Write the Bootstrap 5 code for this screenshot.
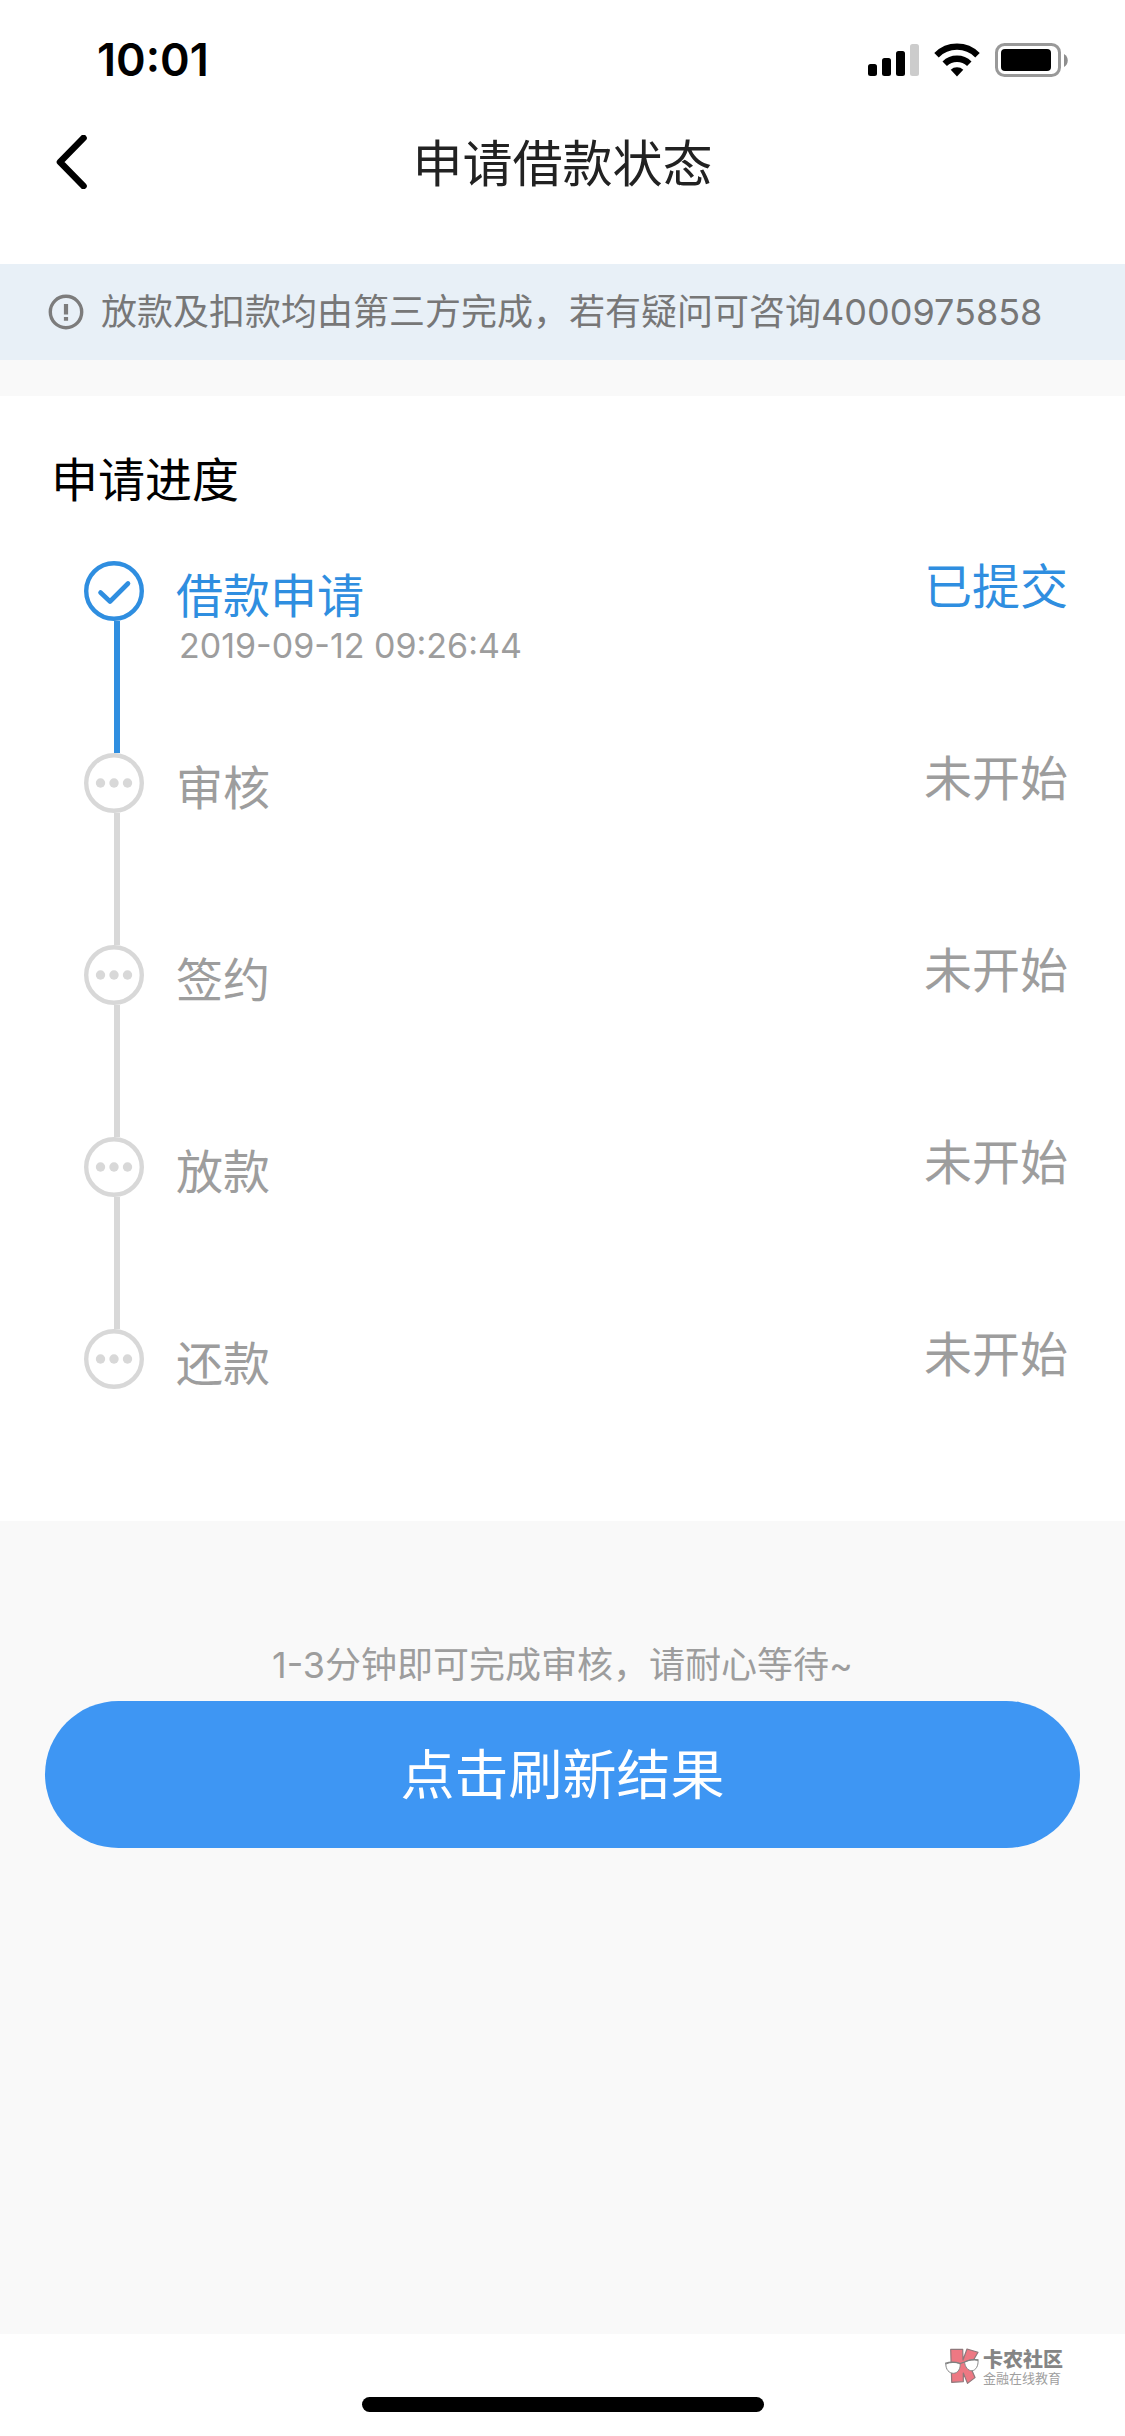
<!DOCTYPE html>
<html lang="zh-CN">
<head>
<meta charset="utf-8">
<meta name="viewport" content="width=device-width, initial-scale=1">
<title>申请借款状态</title>
<link href="https://cdn.jsdelivr.net/npm/bootstrap@5.3.0/dist/css/bootstrap.min.css" rel="stylesheet">
<style>
:root { --brand: #2f8ee0; --muted: #9d9d9d; --idle: #d8d8d8; }
body { font-family: Inter, "Noto Sans CJK SC", sans-serif; color: #000; background: #fff; }
svg { display: block; flex: none; }
.status-bar { height: 120px; padding: 0 57px 0 97px; }
.status-time { font-size: 45px; line-height: 60px; font-weight: 600; }
.title-bar { height: 144px; padding: 0 48px 60px; }
.title-bar h1 { font-size: 50px; line-height: 60px; padding-top: 4px; color: #222; font-weight: 400; }
.title-side { width: 48px; }
.notice { height: 96px; padding: 0 48px; gap: 17px; background: #e8f0f7; color: #777; font-size: 36px; line-height: 48px; }
.page-fill { background: #f9f9f9; padding-top: 36px; }
.progress-panel { padding: 51px 57px 132px 48px; }
.progress-panel h2 { font-size: 47px; line-height: 66px; font-weight: 400; padding-left: 3px; }
.steps { padding: 48px 0 0 36px; }
.step { height: 192px; color: var(--muted); }
.step:last-child { height: 60px; }
.step-rail { width: 60px; color: var(--idle); margin-right: 32px; }
.step-rail::after { content: ""; flex: 1; width: 6px; margin-left: 30px; background: currentColor; }
.step:last-child .step-rail::after { display: none; }
.step-name { font-size: 47px; line-height: 52px; padding-top: 9px; }
.step-time { font-size: 34px; line-height: 48px; padding-left: 3px; }
.step-state { font-size: 48px; line-height: 52px; }
.step.done, .step.done .step-rail { color: var(--brand); }
.step.done .step-time { color: var(--muted); }
.actions { padding: 114px 45px 0; }
.hint { font-size: 36px; line-height: 60px; padding-bottom: 6px; color: var(--muted); }
.btn-refresh { --bs-btn-color: #fff; --bs-btn-bg: #3e96f3; --bs-btn-hover-color: #fff; --bs-btn-hover-bg: #3488e2; --bs-btn-border-width: 0; font-size: 54px; line-height: 145px; padding: 2px 0 0; }
.page-foot { height: 102px; }
.home-indicator { width: 402px; height: 15px; bottom: 24px; background: #000; }
.community { right: 62px; top: 14px; gap: 4px; color: #858585; }
.community-name { font-size: 20px; line-height: 23px; font-weight: 900; }
.community-sub { font-size: 13px; line-height: 12px; color: #a0a0a0; }
</style>
</head>
<body class="d-flex flex-column min-vh-100">
<header>
  <div class="status-bar d-flex align-items-center justify-content-between">
    <span class="status-time">10:01</span>
    <div class="d-flex align-items-center">
      <svg width="200" height="34" viewBox="0 0 200 34" role="img" aria-label="信号、无线网络和电池">
        <g><rect x="0" y="21" width="9" height="12" rx="2.5"/><rect x="14" y="15" width="9" height="18" rx="2.5"/><rect x="28" y="8" width="9" height="25" rx="2.5"/><rect x="42" y="1" width="9" height="32" rx="2.5" fill="#ccc"/></g>
        <g transform="translate(89 0)"><path d="M0 33.500L-6.300 26.800A9.200 9.200 0 0 1 6.300 26.800Z"/><path d="M-12.300 20.800A17.500 17.500 0 0 1 12.300 20.800" fill="none" stroke="#000" stroke-width="6.300"/><path d="M-20.500 12.200A29 29 0 0 1 20.500 12.200" fill="none" stroke="#000" stroke-width="6.300"/></g>
        <rect x="128.500" y="1.500" width="63" height="31" rx="8" fill="none" stroke="#999" stroke-width="3"/><rect x="133" y="6" width="50" height="22" rx="4"/><path d="M196 11c5 2.500 5 10.500 0 13z" fill="#8e8e8e"/>
      </svg>
    </div>
  </div>
  <nav class="title-bar d-flex align-items-center justify-content-between" aria-label="页面导航">
    <a href="#" class="title-side link-dark" aria-label="返回"><svg width="48" height="54" viewBox="0 0 48 54"><path d="M35.500 3L12 27L35.500 51" fill="none" stroke="#000" stroke-width="6.600" stroke-linecap="round" stroke-linejoin="round"/></svg></a>
    <h1 class="m-0">申请借款状态</h1>
    <span class="title-side"></span>
  </nav>
</header>
<div class="notice d-flex align-items-center" role="note">
  <svg width="36" height="36" viewBox="0 0 36 36"><circle cx="18" cy="18" r="15.700" fill="none" stroke="#7c7c7c" stroke-width="3.400"/><path d="M18 10v10.500M18 23v3.800" stroke="#7c7c7c" stroke-width="4.200"/></svg>
  <span>放款及扣款均由第三方完成，若有疑问可咨询4000975858</span>
</div>
<main class="page-fill flex-grow-1">
  <section class="progress-panel bg-white">
    <h2 class="m-0">申请进度</h2>
    <ol class="steps list-unstyled m-0">
      <li class="step done d-flex">
        <div class="step-rail d-flex flex-column"><svg width="60" height="60" viewBox="0 0 60 60" fill="none" stroke="currentColor"><circle cx="30" cy="30" r="27.800" stroke-width="4.400"/><path d="M16.500 31.500L26 40.500L44 22.500" stroke-width="4.600" stroke-linecap="round" stroke-linejoin="round"/></svg></div>
        <div class="flex-grow-1"><div class="step-name">借款申请</div><div class="step-time">2019-09-12 09:26:44</div></div>
        <div class="step-state">已提交</div>
      </li>
      <li class="step d-flex">
        <div class="step-rail d-flex flex-column"><svg width="60" height="60" viewBox="0 0 60 60" fill="currentColor"><circle cx="30" cy="30" r="27.800" fill="none" stroke="currentColor" stroke-width="4.400"/><circle cx="16.500" cy="30" r="4.700"/><circle cx="30" cy="30" r="4.700"/><circle cx="43.500" cy="30" r="4.700"/></svg></div>
        <div class="flex-grow-1"><div class="step-name">审核</div></div>
        <div class="step-state">未开始</div>
      </li>
      <li class="step d-flex">
        <div class="step-rail d-flex flex-column"><svg width="60" height="60" viewBox="0 0 60 60" fill="currentColor"><circle cx="30" cy="30" r="27.800" fill="none" stroke="currentColor" stroke-width="4.400"/><circle cx="16.500" cy="30" r="4.700"/><circle cx="30" cy="30" r="4.700"/><circle cx="43.500" cy="30" r="4.700"/></svg></div>
        <div class="flex-grow-1"><div class="step-name">签约</div></div>
        <div class="step-state">未开始</div>
      </li>
      <li class="step d-flex">
        <div class="step-rail d-flex flex-column"><svg width="60" height="60" viewBox="0 0 60 60" fill="currentColor"><circle cx="30" cy="30" r="27.800" fill="none" stroke="currentColor" stroke-width="4.400"/><circle cx="16.500" cy="30" r="4.700"/><circle cx="30" cy="30" r="4.700"/><circle cx="43.500" cy="30" r="4.700"/></svg></div>
        <div class="flex-grow-1"><div class="step-name">放款</div></div>
        <div class="step-state">未开始</div>
      </li>
      <li class="step d-flex">
        <div class="step-rail d-flex flex-column"><svg width="60" height="60" viewBox="0 0 60 60" fill="currentColor"><circle cx="30" cy="30" r="27.800" fill="none" stroke="currentColor" stroke-width="4.400"/><circle cx="16.500" cy="30" r="4.700"/><circle cx="30" cy="30" r="4.700"/><circle cx="43.500" cy="30" r="4.700"/></svg></div>
        <div class="flex-grow-1"><div class="step-name">还款</div></div>
        <div class="step-state">未开始</div>
      </li>
    </ol>
  </section>
  <section class="actions text-center">
    <p class="hint m-0">1-3分钟即可完成审核，请耐心等待~</p>
    <button type="button" class="btn btn-refresh rounded-pill w-100">点击刷新结果</button>
  </section>
</main>
<footer class="page-foot position-relative">
  <div class="community position-absolute d-flex align-items-center">
    <svg width="34" height="36" viewBox="0 0 34 36"><path d="M5.700 1.300H17.700L18 12L22 1L33 4.300L25 18L30 29.600L22.500 35.400L18.300 25V33.600L6.700 34.300Z" fill="#ed7883" stroke="#8f787b" stroke-width="1.200" stroke-linejoin="round"/><path d="M.8 16C5 14 11 14 15 15.500C16 20 13 25.300 8.500 25.300C4 25.300 .8 21.500 .8 16ZM19.500 14C24 11.800 28.500 11.300 33 12.300C33.500 17.500 31 22.300 27 22.800C23 22.800 20 19 19.500 14Z" fill="#fff" stroke="#888" stroke-width="1"/><path d="M0 15.500C5 13.500 11 14 15 15.500L19.500 14C24 11.800 28.500 11 33.500 12" fill="none" stroke="#808080" stroke-width="1.300"/></svg>
    <div><div class="community-name">卡农社区</div><div class="community-sub">金融在线教育</div></div>
  </div>
  <div class="home-indicator position-absolute start-50 translate-middle-x rounded-pill"></div>
</footer>
<script src="https://cdn.jsdelivr.net/npm/bootstrap@5.3.0/dist/js/bootstrap.bundle.min.js"></script>
</body>
</html>
